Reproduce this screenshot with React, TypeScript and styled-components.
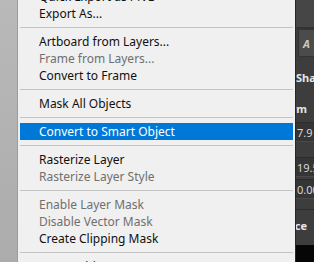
import styled, { createGlobalStyle } from 'styled-components';

const GlobalStyle = createGlobalStyle`
    html, body {
        margin: 0;
        padding: 0;
        width: 314px;
        height: 262px;
        overflow: hidden;
        background: #b3b3b3;
    }
`;

const Screen = styled.div`
    display: flex;
    width: 314px;
    height: 262px;
    overflow: hidden;
`;

const Backdrop = styled.div`
    flex: 0 0 17px;
    background: linear-gradient(180deg, #b9b9b9 0%, #b1b1b1 60%, #acacac 100%);
    border-right: 1px solid #9c9c9c;
`;

const Menu = styled.div`
    flex: 0 0 277px;
    background: #f0f0f0;
    overflow: hidden;
`;

const MenuList = styled.div`
    display: flex;
    flex-direction: column;
    margin-top: -12px;
`;

const Item = styled.div<{ disabled?: boolean; active?: boolean }>`
    height: 17px;
    margin: 0 2px;
    padding-left: 19px;
    display: flex;
    align-items: center;
    font-family: "Noto Sans", sans-serif;
    font-size: 12px;
    white-space: nowrap;
    color: ${p => (p.active ? '#ffffff' : p.disabled ? '#6f6f6f' : '#101010')};
    background: ${p => (p.active ? '#0078d7' : 'transparent')};
`;

const Separator = styled.div`
    height: 11px;
    margin: 0 2px;
    display: flex;
    align-items: center;

    &::after {
        content: '';
        flex: 1;
        border-top: 1px solid #c4c4c4;
    }
`;

const Panel = styled.div`
    flex: 1;
    display: flex;
    flex-direction: column;
    background: #3d3d3d;
    border-left: 1px solid #262626;
    overflow: hidden;
    font-family: "Noto Sans", sans-serif;
    font-size: 11px;
    color: #d6d6d6;
    white-space: nowrap;
`;

const PanelHeader = styled.div`
    height: 27px;
    background: #464646;
    border-bottom: 2px solid #333333;
`;

const ToolButton = styled.div`
    height: 26px;
    margin-left: 2px;
    display: flex;
    align-items: center;
    padding-left: 4px;
    background: #4b4b4b;
    border: 1px solid #343434;
    border-right: none;
    font-weight: bold;
    font-style: italic;
    color: #c8c8c8;
`;

const Label = styled.div<{ align?: 'start' | 'end'; top: number }>`
    display: flex;
    justify-content: ${p => (p.align === 'end' ? 'flex-end' : 'flex-start')};
    margin-top: ${p => p.top}px;
    padding-right: ${p => (p.align === 'end' ? 7 : 0)}px;
    font-weight: bold;
    color: #e6e6e6;
    line-height: 14px;
`;

const Field = styled.div<{ top: number }>`
    height: 18px;
    margin-top: ${p => p.top}px;
    display: flex;
    align-items: center;
    padding-left: 1px;
    background: #353535;
    border-top: 1px solid #2c2c2c;
    border-bottom: 1px solid #4a4a4a;
    color: #d8d8d8;
`;

const Rule = styled.div<{ top: number }>`
    margin-top: ${p => p.top}px;
    border-top: 1px solid #2b2b2b;
`;

const Footer = styled.div`
    margin-top: auto;
    height: 17px;
    background: #060606;
`;

export default function App() {
    return (
        <Screen>
            <GlobalStyle />
            <Backdrop />
            <Menu>
                <MenuList>
                    <Item>Quick Export as PNG</Item>
                    <Item>Export As...</Item>
                    <Separator />
                    <Item>Artboard from Layers...</Item>
                    <Item disabled>Frame from Layers...</Item>
                    <Item>Convert to Frame</Item>
                    <Separator />
                    <Item>Mask All Objects</Item>
                    <Separator />
                    <Item active>Convert to Smart Object</Item>
                    <Separator />
                    <Item>Rasterize Layer</Item>
                    <Item disabled>Rasterize Layer Style</Item>
                    <Separator />
                    <Item disabled>Enable Layer Mask</Item>
                    <Item disabled>Disable Vector Mask</Item>
                    <Item>Create Clipping Mask</Item>
                    <Separator />
                    <Item>Smart Object</Item>
                </MenuList>
            </Menu>
            <Panel>
                <PanelHeader />
                <ToolButton>A</ToolButton>
                <Label top={14}>Shape</Label>
                <Label align="end" top={17}>Transform</Label>
                <Field top={6}>7.9</Field>
                <Field top={15}>19.5</Field>
                <Field top={2}>0.00</Field>
                <Rule top={10} />
                <Label align="end" top={9}>Appearance</Label>
                <Footer />
            </Panel>
        </Screen>
    );
}
